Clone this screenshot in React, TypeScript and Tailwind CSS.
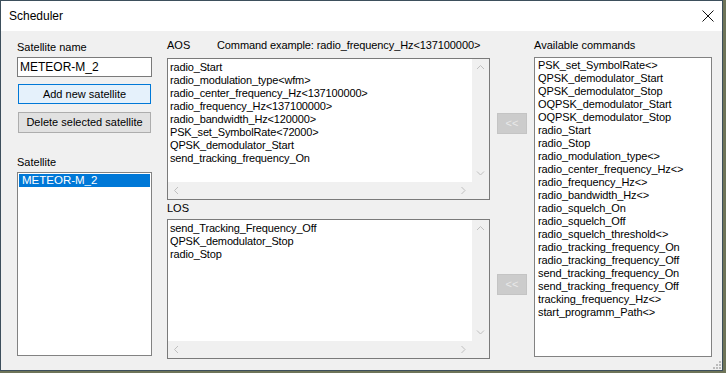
import React from "react";

const AOS = [
  "radio_Start",
  "radio_modulation_type<wfm>",
  "radio_center_frequency_Hz<137100000>",
  "radio_frequency_Hz<137100000>",
  "radio_bandwidth_Hz<120000>",
  "PSK_set_SymbolRate<72000>",
  "QPSK_demodulator_Start",
  "send_tracking_frequency_On",
];

const LOS = ["send_Tracking_Frequency_Off", "QPSK_demodulator_Stop", "radio_Stop"];

const COMMANDS = [
  "PSK_set_SymbolRate<>",
  "QPSK_demodulator_Start",
  "QPSK_demodulator_Stop",
  "OQPSK_demodulator_Start",
  "OQPSK_demodulator_Stop",
  "radio_Start",
  "radio_Stop",
  "radio_modulation_type<>",
  "radio_center_frequency_Hz<>",
  "radio_frequency_Hz<>",
  "radio_bandwidth_Hz<>",
  "radio_squelch_On",
  "radio_squelch_Off",
  "radio_squelch_threshold<>",
  "radio_tracking_frequency_On",
  "radio_tracking_frequency_Off",
  "send_tracking_frequency_On",
  "send_tracking_frequency_Off",
  "tracking_frequency_Hz<>",
  "start_programm_Path<>",
];

function Chevron({ dir }: { dir: "up" | "down" | "left" | "right" }) {
  const d = {
    up: "M1 5 L4.5 1.5 L8 5",
    down: "M1 1.5 L4.5 5 L8 1.5",
    left: "M5 1 L1.5 4.5 L5 8",
    right: "M1.5 1 L5 4.5 L1.5 8",
  }[dir];
  const vert = dir === "up" || dir === "down";
  return (
    <svg width={vert ? 9 : 7} height={vert ? 7 : 9} viewBox={vert ? "0 0 9 7" : "0 0 7 9"}>
      <path d={d} fill="none" stroke="#bfbfbf" strokeWidth="1" />
    </svg>
  );
}

// multiline textbox with both scrollbars (disabled look)
function ScrollBox({ lines, h }: { lines: string[]; h: string }) {
  return (
    <div className={`border border-[#7a7a7a] bg-white flex flex-col ${h}`}>
      <div className="flex flex-1 min-h-0">
        <div className="flex-1 pl-[2px] pt-[2px] leading-[13px] tracking-[-0.15px]">
          {lines.map((l) => (
            <div key={l} className="whitespace-pre">
              {l}
            </div>
          ))}
        </div>
        <div className="w-[17px] bg-[#f0f0f0] flex flex-col items-center justify-between py-[5px]">
          <Chevron dir="up" />
          <Chevron dir="down" />
        </div>
      </div>
      <div className="h-[17px] flex">
        <div className="flex-1 bg-[#f0f0f0] flex items-center justify-between px-[5px]">
          <Chevron dir="left" />
          <Chevron dir="right" />
        </div>
        <div className="w-[17px] bg-[#f0f0f0]" />
      </div>
    </div>
  );
}

function ArrowButton() {
  return (
    <div className="h-[21px] w-[30px] bg-[#cccccc] border border-[#c4c4c4] flex items-center justify-center text-[#e9e9e9]">
      &lt;&lt;
    </div>
  );
}

export default function App() {
  return (
    <div className="w-[726px] h-[373px] bg-[#6e7458] overflow-hidden">
      <div
        className="w-[723px] h-[371px] border border-[#3d4f5c] bg-[#f0f0f0] flex flex-col text-[11px] text-black whitespace-nowrap"
        style={{ fontFamily: '"Liberation Sans", Arial, sans-serif' }}
      >
        {/* title bar */}
        <div className="h-[30px] bg-white flex items-center justify-between pl-[8px] pr-[5px] shrink-0">
          <span className="text-[12px]">Scheduler</span>
          <svg width="12" height="12" viewBox="0 0 12 12" className="mr-[3px]">
            <path d="M0.5 0.5 L11.5 11.5 M11.5 0.5 L0.5 11.5" stroke="#111" strokeWidth="1" />
          </svg>
        </div>

        {/* client area */}
        <div className="flex-1 relative flex pl-[16px] pt-[8px]">
          {/* left column */}
          <div className="w-[135px] flex flex-col">
            <div className="h-[13px] mt-[2px] leading-[13px]">Satellite name</div>
            <div className="h-[20px] mt-[3px] border border-[#7a7a7a] bg-white px-[2px] leading-[18px] text-[12px]">
              METEOR-M_2
            </div>
            <div className="h-[20px] mt-[7px] mx-[1px] border border-[#0078d7] bg-[#e5f1fb] flex items-center justify-center">
              Add new satellite
            </div>
            <div className="h-[21px] mt-[8px] mx-[1px] border border-[#adadad] bg-[#e1e1e1] flex items-center justify-center">
              Delete selected satellite
            </div>
            <div className="h-[13px] mt-[23px] leading-[13px]">Satellite</div>
            <div className="h-[184px] mt-[3px] border border-[#828282] bg-white p-[1px]">
              <div className="h-[13px] bg-[#0078d7] text-white pl-[3px] leading-[13px] text-[11.5px]">METEOR-M_2</div>
            </div>
          </div>

          {/* AOS / LOS column */}
          <div className="w-[323px] ml-[15px] flex flex-col">
            <div className="h-[19px] flex leading-[13px]">
              <span className="w-[50px]">AOS</span>
              <span className="tracking-[-0.1px]">Command example: radio_frequency_Hz&lt;137100000&gt;</span>
            </div>
            <ScrollBox lines={AOS} h="h-[142px]" />
            <div className="h-[19px] pt-[2px] leading-[13px]">LOS</div>
            <ScrollBox lines={LOS} h="h-[140px]" />
          </div>

          {/* transfer buttons */}
          <div className="w-[30px] ml-[7px] flex flex-col">
            <div className="mt-[74px]">
              <ArrowButton />
            </div>
            <div className="mt-[140px]">
              <ArrowButton />
            </div>
          </div>

          {/* available commands */}
          <div className="w-[178px] ml-[7px] flex flex-col">
            <div className="h-[18px] leading-[13px]">Available commands</div>
            <div className="h-[300px] border border-[#828282] bg-white pl-[3px] pt-[1px] leading-[13px] tracking-[-0.1px]">
              {COMMANDS.map((c) => (
                <div key={c} className="whitespace-pre">
                  {c}
                </div>
              ))}
            </div>
          </div>

          {/* size grip */}
          <svg width="8" height="8" viewBox="0 0 8 8" className="absolute right-[1px] bottom-[1px]">
            {[
              [6, 0],
              [6, 3],
              [3, 3],
              [6, 6],
              [3, 6],
              [0, 6],
            ].map(([x, y]) => (
              <rect key={`${x}-${y}`} x={x} y={y} width="2" height="2" fill="#bcbcbc" />
            ))}
          </svg>
        </div>
      </div>
    </div>
  );
}
